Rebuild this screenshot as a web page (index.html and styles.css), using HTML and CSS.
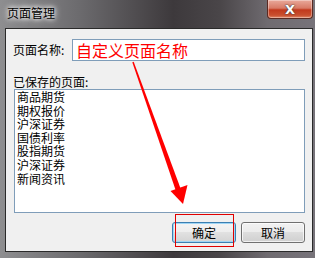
FILE: index.html
```html
<!DOCTYPE html>
<html>
<head>
<meta charset="utf-8">
<link rel="stylesheet" href="styles.css">
</head>
<body>
<div class="window">
  <div class="titlebar">
    <div class="title">页面管理</div>
    <div class="close"><span class="x">X</span></div>
  </div>
  <div class="client">
    <div class="name-row">
      <div class="label">页面名称:</div>
      <div class="input">自定义页面名称</div>
    </div>
    <div class="label saved">已保存的页面:</div>
    <div class="list">
      <div class="item">商品期货</div>
      <div class="item">期权报价</div>
      <div class="item">沪深证券</div>
      <div class="item">国债利率</div>
      <div class="item">股指期货</div>
      <div class="item">沪深证券</div>
      <div class="item">新闻资讯</div>
    </div>
    <div class="buttons">
      <div class="btn default">确定</div>
      <div class="btn">取消</div>
    </div>
  </div>
  <svg class="overlay" width="315" height="258" viewBox="0 0 315 258">
    <polygon points="132.3,62.2 133.7,61.8 181.5,191 176.5,192.8" fill="#ff0000"/>
    <polygon points="170.5,191 187.5,185 183,204" fill="#ff0000"/>
    <rect x="175.5" y="214.5" width="58" height="32" fill="none" stroke="#e00000" stroke-width="1"/>
  </svg>
</div>
</body>
</html>
```
FILE: styles.css
```css
* { box-sizing: border-box; }
html, body { margin: 0; padding: 0; }
body {
  width: 315px;
  height: 258px;
  overflow: hidden;
  font-family: "Noto Sans CJK SC", "Liberation Sans", sans-serif;
  font-size: 12px;
}
.window {
  position: relative;
  width: 315px;
  height: 258px;
  display: flex;
  flex-direction: column;
  background:
    linear-gradient(90deg, #8e8e90 0%, #6c6b6e 25%, #3d393c 55%, #4a4649 70%, #6f6b70 85%, #77737a 100%);
}
.titlebar {
  height: 28px;
  display: flex;
  justify-content: space-between;
  align-items: flex-start;
  padding-left: 7px;
  padding-right: 2px;
}
.title {
  margin-top: 6px;
  font-size: 12px;
  line-height: 14px;
  color: #000;
  text-shadow: 0 0 4px #fff, 0 0 6px rgba(255,255,255,0.8), 0 0 8px rgba(255,255,255,0.6);
}
.close {
  width: 46px;
  height: 19px;
  border: 1px solid #5a2a22;
  border-top: none;
  border-radius: 0 0 4px 4px;
  background: linear-gradient(180deg, #e9a99b 0%, #d87a66 45%, #c2391d 55%, #c9502f 85%, #e08a6a 100%);
  box-shadow: inset 0 0 0 1px rgba(255,255,255,0.35);
  display: flex;
  align-items: center;
  justify-content: center;
}
.x {
  font-family: "DejaVu Sans", sans-serif;
  font-weight: bold;
  font-size: 13px;
  line-height: 13px;
  color: #fff;
  text-shadow: 0 0 1px #333, 0 0 2px #444;
}
.client {
  margin: 0 2px 6px 5px;
  flex: 1;
  background: #f0f0f0;
  border: 1px solid #2a2a2a;
  padding: 10px 7px 0 8px;
  display: flex;
  flex-direction: column;
}
.name-row {
  display: flex;
  align-items: center;
  height: 22px;
}
.label {
  color: #000;
  line-height: 14px;
  margin-left: -1px;
}
.name-row .label { width: 59px; }
.input {
  flex: 1;
  height: 22px;
  border: 1px solid #7f9db9;
  background: #fff;
  color: #ff0000;
  font-size: 16px;
  line-height: 20px;
  padding-left: 3px;
}
.saved { margin-top: 14px; }
.list {
  margin-top: 0;
  height: 124px;
  border: 1px solid #7f9db9;
  background: #fff;
  padding: 0 0 0 2px;
}
.item {
  line-height: 13.6px;
  height: 13.6px;
  color: #000;
}
.buttons {
  display: flex;
  justify-content: flex-end;
  gap: 5px;
  margin-top: 9px;
}
.btn {
  width: 64px;
  height: 21px;
  border: 1px solid #707070;
  border-radius: 3px;
  background: linear-gradient(180deg, #f2f2f2 0%, #ebebeb 49%, #dddddd 50%, #cfcfcf 100%);
  box-shadow: inset 0 0 0 1px rgba(255,255,255,0.7);
  display: flex;
  align-items: center;
  justify-content: center;
  line-height: 14px;
  color: #000;
}
.btn.default {
  border-color: #3c7fb1;
  box-shadow: inset 0 0 0 1px #9fd5f5;
  background: linear-gradient(180deg, #f4f4f4 0%, #ededed 49%, #e1e1e1 50%, #d3d3d3 100%);
}
.overlay {
  position: absolute;
  left: 0;
  top: 0;
  pointer-events: none;
}
```
